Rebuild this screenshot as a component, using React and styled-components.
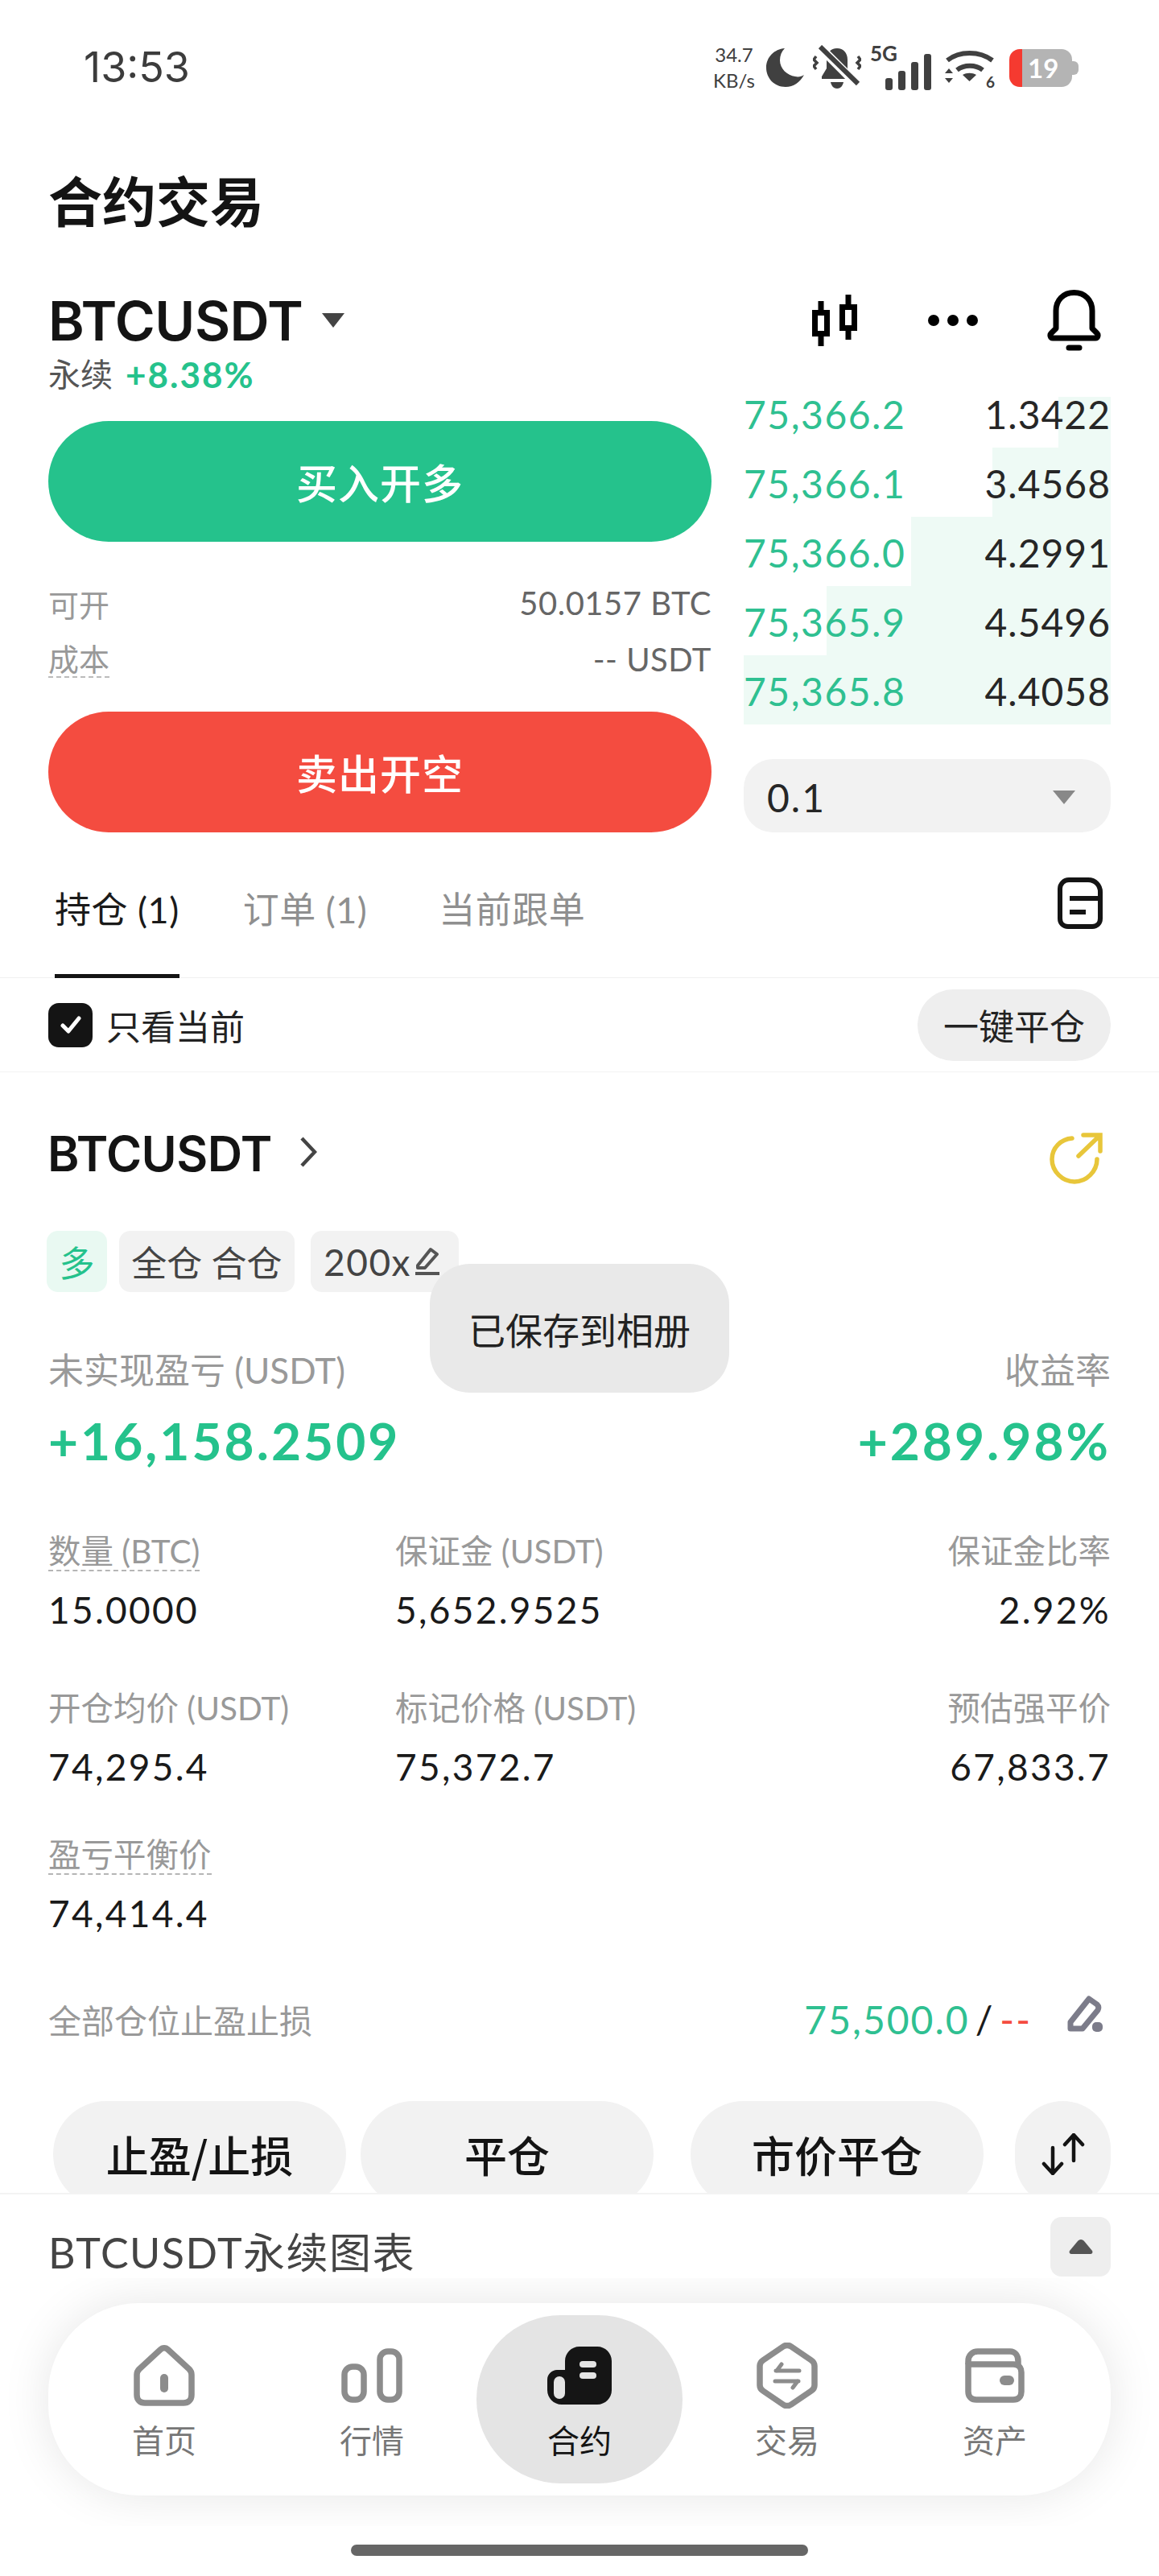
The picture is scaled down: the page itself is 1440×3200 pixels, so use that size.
import styled, { createGlobalStyle } from "styled-components";

/* ---------- Global ---------- */
const GlobalStyle = createGlobalStyle`
  html, body { margin: 0; padding: 0; background: #fff; }
  body { font-family: Lato, "Noto Sans CJK SC", sans-serif; color: #1a1a1a; }
  * { box-sizing: border-box; }
`;

const GREEN = "#25c28c";
const RED = "#f44c40";
const MUTED = "#999999";

/* ---------- Shell ---------- */
const Screen = styled.div`
  position: relative;
  width: 1440px;
  height: 3200px;
  overflow: hidden;
  background: #fff;
`;
const ScrollArea = styled.main`
  height: 2556px;
  overflow: hidden;
`;

/* ---------- Status bar ---------- */
const StatusBar = styled.header`
  height: 168px;
  display: flex;
  align-items: center;
  justify-content: space-between;
  padding: 0 100px 0 104px;
`;
const Clock = styled.div`
  font: 400 52px/60px Inter, sans-serif;
  color: #3c3c3c;
`;
const StatusIcons = styled.div`
  display: flex;
  align-items: center;
  color: #404040;
`;
const NetSpeed = styled.div`
  width: 54px;
  margin-right: 13px;
  font: 400 24px/32px Lato, sans-serif;
  text-align: center;
`;
const BellSlot = styled.div`
  margin-left: 11px;
  display: flex;
`;
const SignalGroup = styled.div`
  position: relative;
  width: 77px;
  height: 56px;
  margin: 0 16px 0 11px;
  display: flex;
  justify-content: flex-end;
  align-items: flex-end;
`;
const FiveG = styled.span`
  position: absolute;
  left: 0;
  top: -3px;
  font: 700 26px/26px Lato, sans-serif;
`;
const WifiGroup = styled.div`
  position: relative;
  width: 62px;
  height: 48px;
  display: flex;
`;
const WifiBand = styled.span`
  position: absolute;
  right: 0;
  bottom: -3px;
  font: 700 19px/19px Lato, sans-serif;
`;
const Battery = styled.div`
  position: relative;
  width: 78px;
  height: 47px;
  margin-left: 18px;
  margin-right: 8px;
  border-radius: 13px;
  background: linear-gradient(90deg, #f53a30 0 16px, #b4b4b4 16px);
  color: #fff;
  font: 700 33px/47px Lato, sans-serif;
  padding-left: 23px;

  &::after {
    content: "";
    position: absolute;
    right: -8px;
    top: 15px;
    width: 8px;
    height: 17px;
    border-radius: 0 6px 6px 0;
    background: #b4b4b4;
  }
`;

/* ---------- Title & symbol ---------- */
const PageTitle = styled.h1`
  margin: 39px 0 0 60px;
  font: 700 67px/80px "Noto Sans CJK SC", sans-serif;
  color: #141414;
`;
const SymbolRow = styled.div`
  height: 76px;
  margin-top: 73px;
  padding: 0 72px 0 60px;
  display: flex;
  align-items: center;
`;
const SymbolName = styled.div`
  font: 600 68px/76px Inter, sans-serif;
  letter-spacing: -0.5px;
  color: #141414;
`;
const Caret = styled.span`
  width: 0;
  height: 0;
  margin: 0 0 0 24px;
  border-left: 14px solid transparent;
  border-right: 14px solid transparent;
  border-top: ${(p) => p.$size || 18}px solid ${(p) => p.$color || "#444"};
`;
const ToolIcons = styled.div`
  margin-left: auto;
  display: flex;
  align-items: center;
  gap: 86px;
`;

/* ---------- Trade panel ---------- */
const TradeGrid = styled.section`
  display: grid;
  grid-template-columns: 824px 456px;
  column-gap: 40px;
  padding: 0 60px;
  margin-top: 4px;
`;
const OrderColumn = styled.div`
  display: flex;
  flex-direction: column;
`;
const SubLine = styled.div`
  height: 83px;
  padding-top: 3px;
  display: flex;
  gap: 16px;
  font-size: 40px;
  line-height: 44px;
  color: #555;
`;
const Change = styled.span`
  color: ${GREEN};
  font-size: 44px;
  font-weight: 700;
  letter-spacing: 2px;
`;
const ActionButton = styled.button`
  height: 150px;
  border: 0;
  border-radius: 75px;
  background: ${(p) => p.$bg};
  color: #fff;
  font: 500 51px/1 "Noto Sans CJK SC", sans-serif;
  letter-spacing: 1px;
`;
const InfoBlock = styled.div`
  height: 211px;
  padding-top: 51px;
  display: flex;
  flex-direction: column;
  gap: 20px;
`;
const InfoRow = styled.div`
  height: 50px;
  display: flex;
  justify-content: space-between;
  align-items: center;
  font-size: 40px;
  letter-spacing: 0.5px;
  color: #666;
`;
const InfoLabel = styled.span`
  font-size: 38px;
  letter-spacing: 0;
  color: ${MUTED};
  ${(p) => p.$dashed && "border-bottom: 2px dashed #bbb; line-height: 44px;"}
`;

/* ---------- Order book ---------- */
const BookColumn = styled.div`
  padding-top: 30px;
`;
const BookRow = styled.div`
  position: relative;
  height: 86px;
  display: flex;
  justify-content: space-between;
  align-items: center;
  padding-top: 2px;
  font-size: 48px;
`;
const DepthBar = styled.span`
  position: absolute;
  right: 0;
  bottom: 0;
  top: ${(p) => p.$top || 0}px;
  background: #eefaf5;
`;
const BookPrice = styled.span`
  position: relative;
  color: #2fc091;
  letter-spacing: 1.500px;
`;
const BookQty = styled.span`
  position: relative;
  color: #262626;
  letter-spacing: 1px;
`;
const StepSelect = styled.div`
  height: 91px;
  margin-top: 43px;
  padding: 4px 44px 0 29px;
  display: flex;
  justify-content: space-between;
  align-items: center;
  border-radius: 36px;
  background: #f2f2f2;
  font-size: 48px;
  letter-spacing: 2px;
  color: #262626;
`;

/* ---------- Tabs ---------- */
const TabBar = styled.nav`
  height: 181px;
  padding: 0 70px 0 68px;
  display: flex;
  align-items: flex-end;
  border-bottom: 1px solid #f0f0f0;
`;
const Tab = styled.div`
  height: 115px;
  margin-right: ${(p) => p.$gap || 79}px;
  margin-bottom: -1px;
  font-size: 45px;
  line-height: 60px;
  letter-spacing: 0.500px;
  color: ${(p) => (p.$active ? "#1a1a1a" : "#8f8f8f")};
  border-bottom: 5px solid ${(p) => (p.$active ? "#141414" : "transparent")};
`;
const TabTool = styled.div`
  margin: 0 0 57px auto;
`;
const FilterRow = styled.div`
  height: 117px;
  padding: 0 60px;
  display: flex;
  align-items: center;
  border-bottom: 1px solid #f3f3f3;
`;
const CheckBox = styled.span`
  width: 55px;
  height: 55px;
  margin-right: 17px;
  border-radius: 13px;
  background: #141414;
  display: flex;
  align-items: center;
  justify-content: center;
`;
const FilterText = styled.span`
  font-size: 43px;
  color: #222;
`;
const CloseAll = styled.button`
  width: 240px;
  height: 89px;
  margin-left: auto;
  border: 0;
  border-radius: 45px;
  background: #eeeeee;
  color: #222;
  font: 400 44px/1 "Noto Sans CJK SC", sans-serif;
`;

/* ---------- Position ---------- */
const Position = styled.section`
  position: relative;
  padding: 70px 60px 0;
`;
const PositionHead = styled.div`
  height: 62px;
  display: flex;
  align-items: flex-start;
`;
const PositionName = styled.div`
  font: 600 60px/62px Inter, sans-serif;
  letter-spacing: -0.5px;
  margin-left: -1px;
  color: #141414;
  margin-right: 34px;
`;
const HeadIcon = styled.div`
  margin-top: ${(p) => p.$top || 0}px;
  margin-left: ${(p) => (p.$end ? "auto" : "0")};
  margin-right: ${(p) => (p.$end ? "10px" : "0")};
`;
const TagRow = styled.div`
  margin-top: 65px;
  margin-left: -2px;
  display: flex;
`;
const Tag = styled.div`
  width: ${(p) => p.$w}px;
  height: 76px;
  margin-right: ${(p) => p.$gap || 15}px;
  display: flex;
  align-items: center;
  justify-content: center;
  gap: 3px;
  border-radius: 14px;
  background: ${(p) => (p.$long ? "#e9f9f2" : "#f2f2f2")};
  color: ${(p) => (p.$long ? GREEN : "#444")};
  font-size: 44px;
`;
const LeverText = styled.span`
  font-size: 46px;
  letter-spacing: 1.500px;
  margin-left: -6px;
`;
const Toast = styled.div`
  position: absolute;
  left: 534px;
  top: 238px;
  width: 372px;
  height: 160px;
  border-radius: 50px;
  background: #e9e9e9;
  display: flex;
  align-items: center;
  justify-content: center;
  font-size: 46px;
  color: #222;
`;
const SummaryLabels = styled.div`
  margin-top: 67px;
  display: flex;
  justify-content: space-between;
  font-size: 44px;
  line-height: 60px;
  color: ${MUTED};
`;
const SummaryValues = styled.div`
  margin-top: 18px;
  display: flex;
  justify-content: space-between;
  font: 700 64px/80px Lato, sans-serif;
  letter-spacing: 3px;
  color: ${GREEN};
`;
const StatRow = styled.div`
  margin-top: ${(p) => p.$top}px;
  display: grid;
  grid-template-columns: 431px 1fr auto;
`;
const Stat = styled.div`
  display: flex;
  flex-direction: column;
  align-items: ${(p) => (p.$right ? "flex-end" : "flex-start")};
`;
const StatLabel = styled.div`
  height: 50px;
  font-size: 40.500px;
  line-height: 50px;
  color: ${MUTED};
  ${(p) => p.$dashed && "border-bottom: 2px dashed #b5b5b5;"}
`;
const StatValue = styled.div`
  height: 60px;
  margin-top: 18px;
  font-size: 46px;
  line-height: 60px;
  letter-spacing: 2.300px;
  color: #1a1a1a;
`;
const StopRow = styled.div`
  height: 60px;
  margin-top: 71px;
  display: flex;
  align-items: center;
`;
const StopLabel = styled.span`
  font-size: 41px;
  color: ${MUTED};
`;
const StopValues = styled.div`
  margin-left: auto;
  display: flex;
  align-items: center;
  gap: 7px;
  font-size: 48px;
  letter-spacing: 2px;
`;
const StopPrice = styled.span`
  color: ${(p) => p.$color || "#1a1a1a"};
`;
const StopEdit = styled.div`
  margin: -12px 8px 0 42px;
  display: flex;
`;
const ActionRow = styled.div`
  margin-top: 72px;
  display: flex;
  padding-left: 6px;
`;
const PillButton = styled.button`
  flex: none;
  width: ${(p) => p.$w || 364}px;
  height: 132px;
  margin-right: ${(p) => p.$gap || 0}px;
  padding: 0;
  border: 0;
  border-radius: 66px;
  background: #f2f2f2;
  color: #141414;
  font: 500 53px/1 "Noto Sans CJK SC", sans-serif;
  display: flex;
  align-items: center;
  justify-content: center;
`;

/* ---------- Chart bar & dock ---------- */
const ChartBar = styled.section`
  height: 106px;
  padding: 28px 60px 0;
  border-top: 2px solid #f3f3f3;
  display: flex;
  justify-content: space-between;
  align-items: flex-start;
`;
const ChartTitle = styled.div`
  font-size: 52px;
  line-height: 70px;
  margin-top: 9px;
  letter-spacing: 1.500px;
  color: #444;
`;
const ChartToggle = styled.div`
  width: 75px;
  height: 74px;
  border-radius: 14px;
  background: #eeeeee;
  display: flex;
  align-items: center;
  justify-content: center;
`;
const DockClip = styled.div`
  height: 308px;
  padding: 31px 60px 0;
  overflow: hidden;
`;
const Dock = styled.div`
  height: 239px;
  padding: 15px 15px 0;
  display: grid;
  grid-template-columns: repeat(5, 258px);
  align-items: start;
  justify-items: center;
  border-radius: 112px;
  background: #fff;
  box-shadow: 0 0 60px rgba(0, 0, 0, 0.1);
`;
const DockItem = styled.div`
  width: 256px;
  height: 209px;
  padding-top: 35px;
  display: flex;
  flex-direction: column;
  align-items: center;
  border-radius: 118px;
  background: ${(p) => (p.$active ? "#e4e4e4" : "transparent")};
`;
const DockIcon = styled.div`
  height: 80px;
  display: flex;
  align-items: center;
  justify-content: center;
`;
const DockLabel = styled.div`
  margin-top: 16px;
  font-size: 40px;
  line-height: 50px;
  color: ${(p) => (p.$active ? "#141414" : "#777")};
`;
const HomeIndicator = styled.div`
  width: 568px;
  height: 14px;
  margin: 23px auto 0;
  border-radius: 7px;
  background: #666;
`;

/* ---------- Icons ---------- */
const MoonIcon = () => (
  <svg width="47" height="48" viewBox="0 0 47 48" fill="#404040">
    <path d="M23 0C10 1 0 11 0 24s10 24 24 24c10 0 18-6 23-15-3 2-7 3-11 2C26 34 17 25 17 15c0-6 2-11 6-15z" />
  </svg>
);
const BellOffIcon = () => (
  <svg width="60" height="56" viewBox="0 0 60 56" fill="none">
    <path d="M30 4c-8 0-13 6-13 14v11l-6 10v3h38v-3l-6-10V18c0-8-5-14-13-14z" fill="#404040" />
    <path d="M22 46h16c-1 5-4 8-8 8s-7-3-8-8z" fill="#404040" />
    <path d="M9 3l44 44" stroke="#fff" strokeWidth="11" />
    <path d="M9 2l47 46" stroke="#404040" strokeWidth="6" />
    <path d="M4 14l-3 4 4 4-4 4 3 4M56 14l3 4-4 4 4 4-3 4" stroke="#404040" strokeWidth="3.500" />
  </svg>
);
const SignalIcon = () => (
  <svg width="58" height="45" viewBox="0 0 58 45" fill="#404040">
    <rect x="0" y="30" width="9" height="15" rx="3" />
    <rect x="16" y="21" width="9" height="24" rx="3" />
    <rect x="32" y="10" width="9" height="35" rx="3" />
    <rect x="48" y="0" width="9" height="45" rx="3" />
  </svg>
);
const WifiIcon = () => (
  <svg width="62" height="48" viewBox="0 0 62 48" fill="none">
    <path d="M3 15C18 3 43 3 59 15" stroke="#404040" strokeWidth="6" />
    <path d="M15 27c9-7 23-7 32 0" stroke="#404040" strokeWidth="6" />
    <path d="M22 33c5-3 12-3 17 0l-8.500 8z" fill="#404040" />
    <path d="M0 31l5-6 5 6zM0 37l5 6 5-6z" fill="#404040" />
  </svg>
);
const CandleIcon = () => (
  <svg width="58" height="64" viewBox="0 0 58 64" fill="none" stroke="#000" strokeWidth="7">
    <path d="M11 8v56M45 0v56" />
    <rect x="3.500" y="22.500" width="15" height="26" fill="#fff" />
    <rect x="37.500" y="15.500" width="15" height="26" fill="#fff" />
  </svg>
);
const DotsIcon = () => (
  <svg width="62" height="14" viewBox="0 0 62 14" fill="#000">
    <circle cx="7" cy="7" r="7" />
    <circle cx="31" cy="7" r="7" />
    <circle cx="55" cy="7" r="7" />
  </svg>
);
const BellIcon = () => (
  <svg width="67" height="76" viewBox="0 0 67 76" fill="none" stroke="#000" strokeWidth="7" strokeLinejoin="round">
    <path d="M33.500 3.500C20 3.500 11 13 11 26v22l-6 6c-2 2-1 6 2 6h53c3 0 4-4 2-6l-6-6V26C56 13 47 3.500 33.500 3.500z" />
    <path d="M27 72h13" strokeLinecap="round" />
  </svg>
);
const DocIcon = () => (
  <svg width="56" height="64" viewBox="0 0 56 64" fill="none" stroke="#141414" strokeWidth="6" strokeLinejoin="round">
    <path d="M14 3h24c9 0 15 7 15 15v33c0 6-4 10-10 10H13C7 61 3 57 3 51V14C3 8 8 3 14 3z" />
    <path d="M15 26h38M15 43h20" />
  </svg>
);
const CheckIcon = () => (
  <svg width="28" height="24" viewBox="0 0 28 24" fill="none" stroke="#fff" strokeWidth="5" strokeLinecap="round" strokeLinejoin="round">
    <path d="M4 13l7 7L24 4" />
  </svg>
);
const ChevronIcon = () => (
  <svg width="22" height="38" viewBox="0 0 22 38" fill="none" stroke="#444" strokeWidth="4.500">
    <path d="M3 2l16 17L3 36" />
  </svg>
);
const ShareIcon = () => (
  <svg width="66" height="66" viewBox="0 0 66 66" fill="none" stroke="#e8c63a" strokeWidth="5.500" strokeLinecap="round">
    <path d="M28 8C14 9 3 20 3 34c0 15 13 28 28 28s28-13 28-28" />
    <path d="M36 30L62 5M42 4h21v20" />
  </svg>
);
const TagPenIcon = () => (
  <svg width="34" height="36" viewBox="0 0 34 36" fill="none" stroke="#555" strokeWidth="4" strokeLinejoin="round">
    <path d="M5 23L21 3l8 6-15 17H5z" />
    <path d="M2 33h30" />
  </svg>
);
const EditIcon = () => (
  <svg width="48" height="46" viewBox="0 0 48 46" fill="none">
    <path d="M6 33L29 4l10 7c2 2 2 5 1 7L21 41H6z" stroke="#7c7c8a" strokeWidth="7" strokeLinejoin="round" />
    <rect x="33" y="33" width="13" height="12" rx="5" fill="#7c7c8a" />
  </svg>
);
const SortIcon = () => (
  <svg width="56" height="52" viewBox="0 0 56 52" fill="none" stroke="#141414" strokeWidth="4.500" strokeLinecap="round" strokeLinejoin="round">
    <path d="M15 18v32M4 38l11 12 11-12" />
    <path d="M41 2v32M30 14L41 2l11 12" />
  </svg>
);
const TriangleUp = () => (
  <svg width="30" height="18" viewBox="0 0 30 18" fill="#555">
    <path d="M15 0c2 0 3 1 4 2l10 12c1 2 0 4-2 4H3c-2 0-3-2-2-4L11 2c1-1 2-2 4-2z" />
  </svg>
);
const HomeIcon = () => (
  <svg width="76" height="76" viewBox="0 0 76 76" fill="none" stroke="#8c8c8c" strokeWidth="7.500" strokeLinejoin="round">
    <path d="M33 6L7 30c-2 2-3 4-3 7v25c0 6 4 10 10 10h48c6 0 10-4 10-10V37c0-3-1-5-3-7L43 6c-3-3-7-3-10 0z" />
    <rect x="33" y="36" width="10" height="23" rx="5" fill="#8c8c8c" stroke="none" />
  </svg>
);
const MarketIcon = () => (
  <svg width="76" height="68" viewBox="0 0 76 68" fill="none" stroke="#8c8c8c" strokeWidth="7.500">
    <rect x="4" y="23" width="24" height="41" rx="10" />
    <rect x="48" y="4" width="24" height="60" rx="10" />
  </svg>
);
const ContractIcon = () => (
  <svg width="80" height="72" viewBox="0 0 80 72" fill="#151515">
    <path d="M22 18C22 8 30 0 40 0h22c10 0 18 8 18 18v36c0 10-8 18-18 18H18C8 72 0 64 0 54V41c0-7 6-12 12-12h10z" />
    <rect x="8" y="37" width="14" height="28" rx="7" fill="#e4e4e4" />
    <rect x="40" y="18" width="21" height="8" rx="4" fill="#e4e4e4" />
    <rect x="40" y="32" width="21" height="8" rx="4" fill="#e4e4e4" />
  </svg>
);
const TradeIcon = () => (
  <svg width="76" height="82" viewBox="0 0 76 82" fill="none" stroke="#8c8c8c" strokeWidth="7.500" strokeLinejoin="round">
    <path d="M33 5L8 22c-3 2-4 4-4 7v24c0 3 1 5 4 7l25 17c3 2 7 2 10 0l25-17c3-2 4-4 4-7V29c0-3-1-5-4-7L43 5c-3-2-7-2-10 0z" />
    <path d="M24 35h29M31 27l-6 8M52 48H23M45 56l6-8" strokeWidth="5" strokeLinecap="round" />
  </svg>
);
const WalletIcon = () => (
  <svg width="74" height="68" viewBox="0 0 74 68" fill="none" stroke="#8c8c8c" strokeWidth="7.500" strokeLinejoin="round">
    <path d="M4 20v-4C4 9 9 4 16 4h40c6 0 10 5 10 12v4" />
    <path d="M4 20h56c6 0 10 4 10 10v24c0 6-4 10-10 10H14C8 64 4 60 4 54V20z" />
    <rect x="43" y="34" width="18" height="12" rx="6" fill="#8c8c8c" stroke="none" />
  </svg>
);

/* ---------- Data ---------- */
const book = [
  { price: "75,366.2", qty: "1.3422", bar: 65, top: 23 },
  { price: "75,366.1", qty: "3.4568", bar: 147 },
  { price: "75,366.0", qty: "4.2991", bar: 248 },
  { price: "75,365.9", qty: "4.5496", bar: 353 },
  { price: "75,365.8", qty: "4.4058", bar: 456 },
];
const dock = [
  { label: "首页", icon: <HomeIcon /> },
  { label: "行情", icon: <MarketIcon /> },
  { label: "合约", icon: <ContractIcon />, active: true },
  { label: "交易", icon: <TradeIcon /> },
  { label: "资产", icon: <WalletIcon /> },
];

/* ---------- Page ---------- */
export default function App() {
  return (
    <Screen>
      <GlobalStyle />
      <StatusBar>
        <Clock>13:53</Clock>
        <StatusIcons>
          <NetSpeed>34.7<br />KB/s</NetSpeed>
          <MoonIcon />
          <BellSlot>
            <BellOffIcon />
          </BellSlot>
          <SignalGroup>
            <FiveG>5G</FiveG>
            <SignalIcon />
          </SignalGroup>
          <WifiGroup>
            <WifiIcon />
            <WifiBand>6</WifiBand>
          </WifiGroup>
          <Battery>19</Battery>
        </StatusIcons>
      </StatusBar>

      <ScrollArea>
        <PageTitle>合约交易</PageTitle>
        <SymbolRow>
          <SymbolName>BTCUSDT</SymbolName>
          <Caret />
          <ToolIcons>
            <CandleIcon />
            <DotsIcon />
            <BellIcon />
          </ToolIcons>
        </SymbolRow>

        <TradeGrid>
          <OrderColumn>
            <SubLine>
              <span>永续</span>
              <Change>+8.38%</Change>
            </SubLine>
            <ActionButton $bg={GREEN}>买入开多</ActionButton>
            <InfoBlock>
              <InfoRow>
                <InfoLabel>可开</InfoLabel>
                <span>50.0157 BTC</span>
              </InfoRow>
              <InfoRow>
                <InfoLabel $dashed>成本</InfoLabel>
                <span>-- USDT</span>
              </InfoRow>
            </InfoBlock>
            <ActionButton $bg={RED}>卖出开空</ActionButton>
          </OrderColumn>

          <BookColumn>
            {book.map((row) => (
              <BookRow key={row.price}>
                <DepthBar $top={row.top} style={{ width: row.bar }} />
                <BookPrice>{row.price}</BookPrice>
                <BookQty>{row.qty}</BookQty>
              </BookRow>
            ))}
            <StepSelect>
              0.1
              <Caret $color="#888" $size={17} />
            </StepSelect>
          </BookColumn>
        </TradeGrid>

        <TabBar>
          <Tab $active>持仓 (1)</Tab>
          <Tab $gap={89}>订单 (1)</Tab>
          <Tab>当前跟单</Tab>
          <TabTool>
            <DocIcon />
          </TabTool>
        </TabBar>

        <FilterRow>
          <CheckBox>
            <CheckIcon />
          </CheckBox>
          <FilterText>只看当前</FilterText>
          <CloseAll>一键平仓</CloseAll>
        </FilterRow>

        <Position>
          <PositionHead>
            <PositionName>BTCUSDT</PositionName>
            <HeadIcon $top={10}>
              <ChevronIcon />
            </HeadIcon>
            <HeadIcon $top={4} $end>
              <ShareIcon />
            </HeadIcon>
          </PositionHead>

          <TagRow>
            <Tag $long $w={75}>多</Tag>
            <Tag $w={218} $gap={20}>全仓 合仓</Tag>
            <Tag $w={184}>
              <LeverText>200x</LeverText>
              <TagPenIcon />
            </Tag>
          </TagRow>

          <Toast>已保存到相册</Toast>

          <SummaryLabels>
            <span>未实现盈亏 (USDT)</span>
            <span>收益率</span>
          </SummaryLabels>
          <SummaryValues>
            <span>+16,158.2509</span>
            <span>+289.98%</span>
          </SummaryValues>

          <StatRow $top={72}>
            <Stat>
              <StatLabel $dashed>数量 (BTC)</StatLabel>
              <StatValue>15.0000</StatValue>
            </Stat>
            <Stat>
              <StatLabel>保证金 (USDT)</StatLabel>
              <StatValue>5,652.9525</StatValue>
            </Stat>
            <Stat $right>
              <StatLabel>保证金比率</StatLabel>
              <StatValue>2.92%</StatValue>
            </Stat>
          </StatRow>
          <StatRow $top={67}>
            <Stat>
              <StatLabel>开仓均价 (USDT)</StatLabel>
              <StatValue>74,295.4</StatValue>
            </Stat>
            <Stat>
              <StatLabel>标记价格 (USDT)</StatLabel>
              <StatValue>75,372.7</StatValue>
            </Stat>
            <Stat $right>
              <StatLabel>预估强平价</StatLabel>
              <StatValue>67,833.7</StatValue>
            </Stat>
          </StatRow>
          <StatRow $top={54}>
            <Stat>
              <StatLabel $dashed>盈亏平衡价</StatLabel>
              <StatValue>74,414.4</StatValue>
            </Stat>
          </StatRow>

          <StopRow>
            <StopLabel>全部仓位止盈止损</StopLabel>
            <StopValues>
              <StopPrice $color="#2fc091">75,500.0</StopPrice>
              <StopPrice>/</StopPrice>
              <StopPrice $color={RED}>--</StopPrice>
            </StopValues>
            <StopEdit>
              <EditIcon />
            </StopEdit>
          </StopRow>

          <ActionRow>
            <PillButton $gap={18}>止盈/止损</PillButton>
            <PillButton $gap={46}>平仓</PillButton>
            <PillButton $gap={39}>市价平仓</PillButton>
            <PillButton $w={119}>
              <SortIcon />
            </PillButton>
          </ActionRow>
        </Position>
      </ScrollArea>

      <ChartBar>
        <ChartTitle>BTCUSDT永续图表</ChartTitle>
        <ChartToggle>
          <TriangleUp />
        </ChartToggle>
      </ChartBar>

      <DockClip>
        <Dock>
          {dock.map((item) => (
            <DockItem key={item.label} $active={item.active}>
              <DockIcon>{item.icon}</DockIcon>
              <DockLabel $active={item.active}>{item.label}</DockLabel>
            </DockItem>
          ))}
        </Dock>
      </DockClip>
      <HomeIndicator />
    </Screen>
  );
}
